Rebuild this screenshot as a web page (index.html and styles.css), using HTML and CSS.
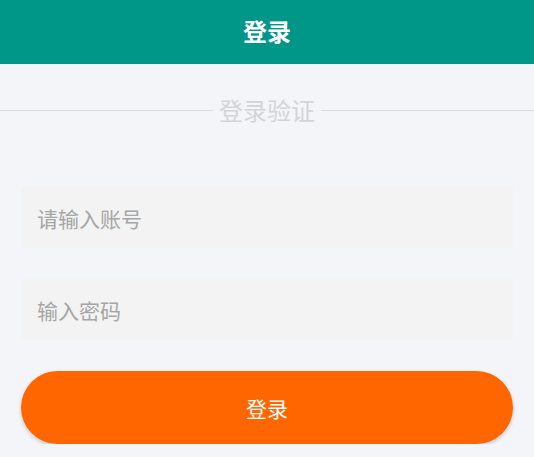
FILE: index.html
```html
<!DOCTYPE html>
<html lang="zh-CN">
<head>
<meta charset="utf-8">
<title>登录</title>
<link rel="stylesheet" href="styles.css">
</head>
<body>
<header class="topbar"><h1 class="topbar-title">登录</h1></header>
<main class="page">
  <div class="divider"><span class="divider-text">登录验证</span></div>
  <form class="form">
    <input class="field" type="text" placeholder="请输入账号">
    <input class="field" type="password" placeholder="输入密码">
    <button class="submit" type="button">登录</button>
  </form>
</main>
</body>
</html>
```
FILE: styles.css
```css
* { box-sizing: border-box; }
html, body {
  margin: 0;
  padding: 0;
  background: #f4f5f9;
  font-family: "Noto Sans CJK SC", "Noto Sans", sans-serif;
}
.topbar {
  height: 64px;
  background: #009688;
  display: flex;
  align-items: center;
  justify-content: center;
}
.topbar-title {
  margin: 0;
  color: #ffffff;
  font-size: 24px;
  font-weight: 700;
  line-height: 1;
  padding-bottom: 2px;
}
.page {
  display: flex;
  flex-direction: column;
}
.divider {
  margin-top: 34px;
  display: flex;
  align-items: center;
  gap: 6px;
  height: 24px;
}
.divider::before, .divider::after {
  content: "";
  flex: 1;
  height: 1px;
  background: #dcdde1;
}
.divider-text {
  color: #d3d4d6;
  font-size: 24px;
  line-height: 24px;
}
.form {
  margin-top: 65px;
  padding: 0 21px;
  display: flex;
  flex-direction: column;
}
.field {
  height: 61px;
  border: none;
  outline: none;
  background: #f3f3f3;
  padding: 0 16px;
  font-family: inherit;
  font-size: 21px;
  color: #333;
  margin-bottom: 31px;
  border-radius: 0;
}
.field::placeholder { color: #a6a6a6; }
.submit {
  height: 73px;
  border: none;
  border-radius: 37px;
  background: #ff6600;
  color: #ffffff;
  font-family: inherit;
  font-size: 21px;
  box-shadow: 0 2px 4px rgba(0,0,0,0.18);
  padding: 0;
}
```
